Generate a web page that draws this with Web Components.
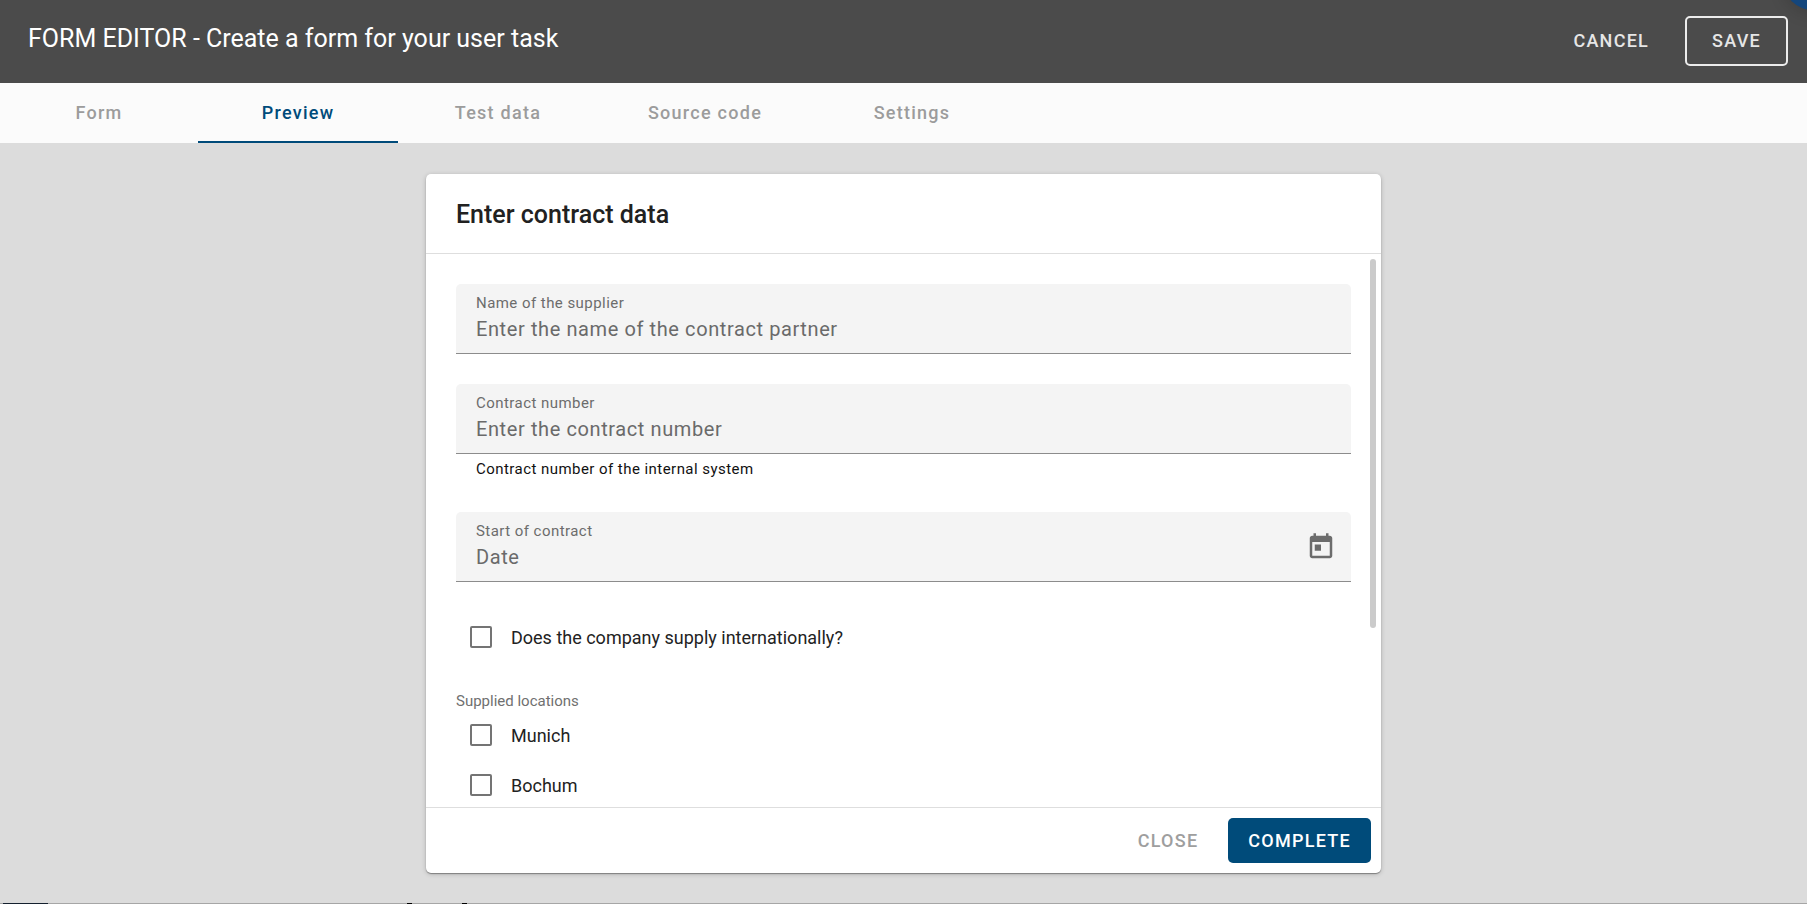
<!DOCTYPE html>
<html lang="en">
<head>
<meta charset="utf-8">
<meta name="viewport" content="width=device-width, initial-scale=1">
<title>Form editor</title>
<style>
html, body { margin: 0; height: 100%; }
body { font-family: Roboto, "Liberation Sans", sans-serif; background: #dcdcdc; color: #222; }
</style>
</head>
<body>
<form-editor></form-editor>
<script>
const define = (name, html, setup) => {
  const template = document.createElement('template');
  template.innerHTML = html;
  customElements.define(name, class extends HTMLElement {
    constructor() {
      super();
      this.attachShadow({ mode: 'open' }).append(template.content.cloneNode(true));
    }
    connectedCallback() {
      if (setup && !this.ready) { this.ready = true; setup(this, this.shadowRoot); }
    }
  });
};

define('action-button', `
<style>
:host { display: block; }
button { box-sizing: border-box; width: 100%; height: 45px; margin: 0; padding: 0 20px; border: 0; border-radius: 5px; background: none;
  color: #9e9e9e; font: 500 18px/20px Roboto, sans-serif; letter-spacing: 0.07em; text-transform: uppercase; cursor: pointer; }
:host([kind="light"]) button { height: 50px; color: #e6e6e6; }
:host([kind="outline"]) button { height: 50px; padding: 0 25px; border: 2px solid #ececec; color: #e6e6e6; }
:host([kind="primary"]) button { background: #004b7a; color: #fff; }
</style>
<button type="button"><slot></slot></button>`);

define('editor-header', `
<style>
:host { position: relative; display: flex; align-items: center; gap: 16px; height: 83px; flex: none; box-sizing: border-box; padding: 0 19px 2px 28px; background: #4b4b4b; overflow: hidden; }
h1 { margin: 0 auto 4px 0; color: #fff; font: 400 25px/32px Roboto, sans-serif; }
.bubble { position: absolute; top: -50px; right: -36px; width: 60px; height: 60px; border-radius: 50%; background: #14467c; box-shadow: 0 4px 16px rgba(0,0,0,.15); }
</style>
<h1><slot></slot></h1>
<action-button kind="light">Cancel</action-button>
<action-button kind="outline">Save</action-button>
<span class="bubble"></span>`);

define('editor-tabs', `
<style>
:host { display: block; flex: none; background: #fbfbfb; }
nav { display: grid; grid-template-columns: 198px 200px 200px 214px 200px; height: 60px; }
a { display: flex; align-items: center; justify-content: center; box-sizing: border-box; padding-top: 2px; border-bottom: 2px solid transparent;
  color: #9c9c9c; font: 500 18px/20px Roboto, sans-serif; letter-spacing: 0.07em; text-decoration: none; }
a[aria-current] { color: #004b7a; border-color: #004b7a; }
</style>
<nav>
<a href="#form">Form</a><a href="#preview" aria-current="page">Preview</a><a href="#test-data">Test data</a><a href="#source">Source code</a><a href="#settings">Settings</a>
</nav>`);

define('text-field', `
<style>
:host { display: block; }
.box { display: flex; align-items: center; box-sizing: border-box; height: 70px; padding: 0 15px 0 20px; background: #f4f4f4; border-bottom: 1px solid #8c8c8c; border-radius: 5px 5px 0 0; }
.text { flex: 1; min-width: 0; }
label { display: block; color: #6c6c6c; font-size: 15px; line-height: 20px; letter-spacing: 0.03em; }
input { display: block; width: 100%; height: 32px; margin: 0; padding: 0; border: 0; outline: 0; background: none; color: #222; font: 400 20px/28px Roboto, sans-serif; letter-spacing: 0.03em; }
input::placeholder { color: #6a6a6a; opacity: 1; }
.hint { margin: 0; padding: 5px 20px 3px; color: #111; font-size: 15px; line-height: 20px; letter-spacing: 0.03em; }
.hint[hidden] { display: none; }
</style>
<div class="box">
<div class="text"><label for="field"></label><input id="field" type="text" aria-describedby="hint"></div>
<slot></slot>
</div>
<p class="hint" id="hint"></p>`, (host, root) => {
  root.querySelector('label').textContent = host.getAttribute('label');
  root.querySelector('input').placeholder = host.getAttribute('placeholder');
  const hint = root.querySelector('.hint');
  hint.textContent = host.getAttribute('hint') || '';
  hint.hidden = !host.hasAttribute('hint');
});

define('date-button', `
<style>
:host { display: block; }
button { display: block; margin: 0; padding: 0; border: 0; background: none; cursor: pointer; }
svg { display: block; width: 30px; height: 30px; fill: #6c6c6c; }
</style>
<button type="button" aria-label="Choose date"><svg viewBox="0 0 24 24"><path d="M19 3h-1V1h-2v2H8V1H6v2H5c-1.110 0-1.990.9-1.990 2L3 19c0 1.100.890 2 2 2h14c1.100 0 2-.9 2-2V5c0-1.100-.9-2-2-2zm0 16H5V8h14v11zM7 10h5v5H7z"/></svg></button>`);

define('check-option', `
<style>
:host { display: block; }
div { display: flex; align-items: center; gap: 19px; height: 50px; padding-left: 14px; }
input { appearance: none; box-sizing: border-box; flex: none; width: 22px; height: 22px; margin: 0; border: 2px solid #747474; border-radius: 2px; }
input:checked { background: #004b7a; border-color: #004b7a; }
label { padding-top: 2px; color: #222; font-size: 18px; line-height: 24px; }
</style>
<div><input type="checkbox" id="check"><label for="check"><slot></slot></label></div>`);

define('option-group', `
<style>
:host { display: block; }
fieldset { margin: 0; padding: 0; border: 0; min-width: 0; }
legend { padding: 0; color: #707070; font-size: 15px; line-height: 18px; }
</style>
<fieldset><legend></legend><slot></slot></fieldset>`, (host, root) => {
  root.querySelector('legend').textContent = host.getAttribute('label');
});

define('form-card', `
<style>
:host { display: flex; flex-direction: column; box-sizing: border-box; width: 955px; max-width: 100%; min-height: 0; background: #fff; border-radius: 5px; box-shadow: 0 1px 1px rgba(0,0,0,.35), 0 1px 5px rgba(0,0,0,.2); }
header { flex: none; padding: 25px 30px 22px; border-bottom: 1px solid #dedede; }
h2 { margin: 0; color: #212121; font: 500 25px/32px Roboto, sans-serif; }
.area { position: relative; flex: 1; min-height: 0; display: flex; }
.scroll { flex: 1; min-width: 0; display: flex; flex-direction: column; gap: 30px; padding: 30px; overflow-y: auto; scrollbar-width: none; }
.track { position: absolute; top: 5px; right: 5px; bottom: 5px; width: 6px; }
.thumb { height: 68%; border-radius: 3px; background: #cbcbcb; }
footer { flex: none; display: flex; justify-content: flex-end; gap: 10px; padding: 10px; border-top: 1px solid #dedede; }
</style>
<header><h2><slot name="title"></slot></h2></header>
<div class="area"><div class="scroll"><slot></slot></div><div class="track"><div class="thumb"></div></div></div>
<footer><slot name="actions"></slot></footer>`);

define('page-edge', `
<style>
:host { display: block; flex: none; height: 1px; background:
  linear-gradient(90deg, transparent 3px, #14202e 3px 48px, transparent 48px 407px, #000 407px 412px, transparent 412px 462px, #000 462px 467px, transparent 467px) #a6a6a6; }
</style>`);

define('form-editor', `
<style>
:host { display: flex; flex-direction: column; height: 100vh; }
main { flex: 1; min-height: 0; display: flex; justify-content: center; padding: 31px 20px 30px; }
</style>
<editor-header>FORM EDITOR - Create a form for your user task</editor-header>
<editor-tabs></editor-tabs>
<main>
<form-card>
<span slot="title">Enter contract data</span>
<text-field label="Name of the supplier" placeholder="Enter the name of the contract partner"></text-field>
<text-field label="Contract number" placeholder="Enter the contract number" hint="Contract number of the internal system"></text-field>
<text-field label="Start of contract" placeholder="Date"><date-button></date-button></text-field>
<check-option>Does the company supply internationally?</check-option>
<option-group label="Supplied locations">
<check-option>Munich</check-option>
<check-option>Bochum</check-option>
</option-group>
<action-button slot="actions">Close</action-button>
<action-button slot="actions" kind="primary">Complete</action-button>
</form-card>
</main>
<page-edge></page-edge>`);
</script>
</body>
</html>
